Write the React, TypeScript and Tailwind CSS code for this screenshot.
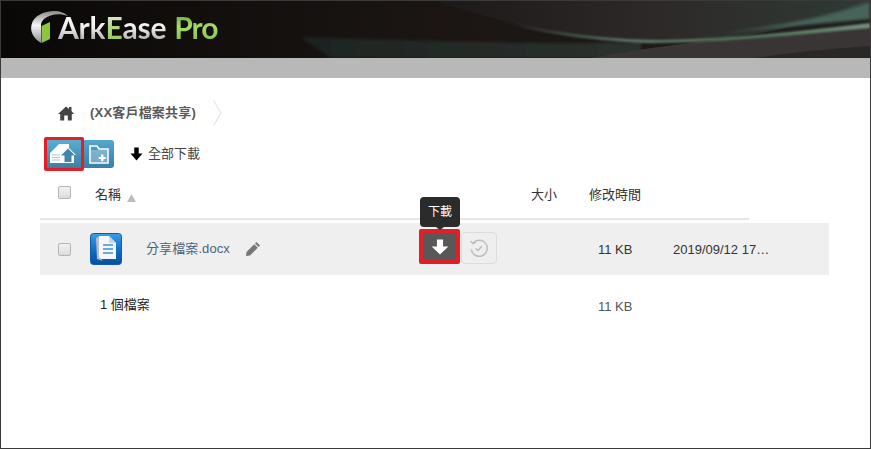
import React from "react";

function Check() {
  return <div className="w-[13px] h-[13px] rounded-[2px] border border-[#b5b5b5] bg-gradient-to-b from-[#f2f2f2] to-[#dcdcdc]" />;
}

function Logo() {
  return (
    <div className="flex items-center ml-[29px] mt-[8px]">
      <svg width="38" height="34" viewBox="0 0 38 34" className="mt-[1px] shrink-0">
        <defs>
          <linearGradient id="arc" x1="0" y1="0" x2="0" y2="1">
            <stop offset="0" stopColor="#8a8a8a" />
            <stop offset="0.45" stopColor="#f4f4f4" />
            <stop offset="1" stopColor="#8f8f8f" />
          </linearGradient>
        </defs>
        <path d="M11 33 C3 28 0 21 1.5 15 C3 6 14 1 24 1 C30 1 35 3 38 6 C30 3 20 4 14 9 C12 11 11 13 11 15 Z" fill="url(#arc)" />
        <path d="M11.5 16 L20 12 L20 29 L11.5 33 Z" fill="#8cc63f" />
      </svg>
      <div className="-ml-[10px] text-[30px] leading-[34px] font-bold font-['Lato','Liberation_Sans',sans-serif] tracking-[-0.2px] whitespace-nowrap mt-[1px]">
        <span className="bg-gradient-to-b from-[#ffffff] via-[#f0f0f0] to-[#9a9a9a] bg-clip-text text-transparent">Ark</span>
        <span className="bg-gradient-to-b from-[#f2f2f2] via-[#b4d78c] to-[#8cc63f] bg-clip-text text-transparent">E</span>
        <span className="bg-gradient-to-b from-[#ffffff] via-[#f0f0f0] to-[#9a9a9a] bg-clip-text text-transparent">ase</span>
        <span className="ml-[8px] tracking-[-1px] bg-gradient-to-b from-[#5d9a2a] via-[#a6dc6a] to-[#7cb83a] bg-clip-text text-transparent">Pro</span>
      </div>
    </div>
  );
}

function Swoosh() {
  return (
    <svg className="absolute inset-0" width="869" height="57" viewBox="0 0 869 57" preserveAspectRatio="none">
      <defs>
        <linearGradient id="up" x1="0" y1="0" x2="1" y2="0">
          <stop offset="0" stopColor="#1c1918" />
          <stop offset="0.5" stopColor="#2d2928" />
          <stop offset="1" stopColor="#2f3a35" />
        </linearGradient>
        <linearGradient id="band" x1="0" y1="0" x2="1" y2="0">
          <stop offset="0" stopColor="#2a2b29" />
          <stop offset="0.35" stopColor="#60796a" />
          <stop offset="0.7" stopColor="#4f7459" />
          <stop offset="1" stopColor="#76917f" />
        </linearGradient>
        <linearGradient id="low" x1="0" y1="0" x2="1" y2="0">
          <stop offset="0" stopColor="#1d2320" />
          <stop offset="1" stopColor="#2b312e" />
        </linearGradient>
        <filter id="b1"><feGaussianBlur stdDeviation="0.8" /></filter>
        <filter id="b2"><feGaussianBlur stdDeviation="1.6" /></filter>
      </defs>
      <path d="M300 36 C420 40 540 44 640 41 L640 57 L330 57 Z" fill="url(#low)" filter="url(#b2)" />
      <path d="M590 57 C680 40 780 32 869 25 L869 57 Z" fill="#393535" />
      <path d="M755 57 C800 50 840 47 869 45 L869 57 Z" fill="#2a2727" />
      <path d="M438 1 C500 22 570 36 640 41 C720 42 800 30 869 0 L438 0 Z" fill="url(#up)" />
      <path d="M869 0 C840 12 790 24 720 32 L869 18 Z" fill="#47645a" filter="url(#b2)" />
      <path d="M500 20 C560 34 620 39 660 39 C730 38 800 30 869 22 L869 27 C790 34 720 42 650 42 C590 40 540 32 500 20 Z" fill="url(#band)" filter="url(#b1)" />
    </svg>
  );
}

function UploadIcon() {
  return (
    <svg width="30" height="24" viewBox="0 0 30 24">
      <path d="M10 2 L20 2 L20 6 L27 13 L25 13 L25 21 L1 21 L1 11 Z" fill="#fff" />
      <path d="M3 13 H11 M3 15.5 H11 M3 18 H11" stroke="#9cc9de" strokeWidth="1" />
      <path d="M19 6.5 L26 13.5 L22.5 13.5 L22.5 20 L15.5 20 L15.5 13.5 L12 13.5 Z" fill="#3f86ad" />
    </svg>
  );
}

function FolderIcon() {
  return (
    <svg width="22" height="22" viewBox="0 0 22 22">
      <path d="M2 3 L9 3 L11 6 L20 6 L20 20 L2 20 Z" fill="none" stroke="#fff" strokeWidth="1.6" />
      <rect x="3" y="7" width="16" height="12" fill="#dcecf3" opacity="0.35" />
      <path d="M13 11.5 h2.4 v2.4 h2.4 v2 h-2.4 v2.4 h-2.4 v-2.4 h-2.4 v-2 h2.4 z" fill="#fff" />
    </svg>
  );
}

function Arrow({ fill = "#000", w = 14, h = 14 }: { fill?: string; w?: number; h?: number }) {
  return (
    <svg width={w} height={h} viewBox="0 0 14 14" preserveAspectRatio="none">
      <path d="M4.6 0.5 H9.4 V6.5 H13.5 L7 13.5 L0.5 6.5 H4.6 Z" fill={fill} />
    </svg>
  );
}

function DocIcon() {
  return (
    <svg width="32" height="32" viewBox="0 0 32 32">
      <defs>
        <linearGradient id="doc" x1="0" y1="0" x2="0" y2="1">
          <stop offset="0" stopColor="#3a9fe6" />
          <stop offset="0.55" stopColor="#0f6cc4" />
          <stop offset="1" stopColor="#0a4f9e" />
        </linearGradient>
      </defs>
      <rect x="0.5" y="0.5" width="31" height="31" rx="3" fill="url(#doc)" stroke="#0b5cab" />
      <path d="M6 5 L10 3 L10 25 L13 28 L7 26 Z" fill="#b9bcc0" />
      <path d="M9 3 L19 3 L26 10 L26 26 L11 26 L9 24 Z" fill="#f4f6f8" />
      <path d="M19 3 L19 10 L26 10 Z" fill="#cfd6dc" />
      <path d="M13 12 H23 M13 16 H23 M13 20 H23" stroke="#3d8fdc" strokeWidth="1.3" />
    </svg>
  );
}

function HistoryIcon() {
  return (
    <svg width="20" height="20" viewBox="0 0 20 20" fill="none" stroke="#bdbdbd" strokeWidth="1.5">
      <path d="M4.2 5 A8 8 0 1 1 2.3 11.5" />
      <path d="M1.5 3.2 L4 5.6 L6.8 4.2" />
      <path d="M6.5 10.5 L9 12.5 L13 8" />
    </svg>
  );
}

export default function App() {
  return (
    <div className="w-[871px] h-[449px] border border-[#3a3a3a] bg-white overflow-hidden font-['Liberation_Sans','Noto_Sans_CJK_TC',sans-serif] text-[13px] text-[#333]">
      <header className="relative h-[57px] bg-gradient-to-r from-[#0a0807] via-[#1b1614] to-[#1f1c1a] overflow-hidden">
        <Swoosh />
        <div className="relative"><Logo /></div>
      </header>
      <div className="h-[20px] bg-[#b8b8b8]" />

      <div className="flex items-center h-[26px] mt-[22px] pl-[57px]">
        <svg width="16" height="15" viewBox="0 0 16 15">
          <path d="M11 1 H13.5 V5 L16 8 L13.8 8 L13.8 14.5 L9.8 14.5 L9.8 9.5 L6.2 9.5 L6.2 14.5 L2.2 14.5 L2.2 8 L0 8 L8 0.5 L11 3 Z" fill="#444" />
        </svg>
        <span className="ml-[16px] font-bold text-[#5a5a5a] whitespace-nowrap tracking-[0.2px]">(XX客戶檔案共享)</span>
        <svg width="9" height="26" viewBox="0 0 9 26" className="ml-[17px]">
          <path d="M0.5 0.5 L8 13 L0.5 25.5" fill="none" stroke="#dcdcdc" />
        </svg>
      </div>

      <div className="flex items-center h-[34px] mt-[11px] pl-[43px]">
        <div className="flex items-center justify-center w-[40px] h-[34px] border-[3px] border-[#e21f26] rounded-[2px]">
          <div className="flex items-center justify-center w-[34px] h-[28px] bg-gradient-to-b from-[#5bacd0] to-[#3c7fa5]">
            <UploadIcon />
          </div>
        </div>
        <div className="flex items-center justify-center w-[30px] h-[28px] rounded-r-[3px] bg-gradient-to-b from-[#54a7cd] to-[#3a7ea6]">
          <FolderIcon />
        </div>
        <div className="ml-[16px] flex items-center">
          <Arrow w={13} h={14} />
          <span className="ml-[5px] text-[#444]">全部下載</span>
        </div>
      </div>

      <div className="relative ml-[39px] w-[709px] h-[49px] flex border-b-2 border-[#e6e6e6]">
        <div className="w-[18px]" />
        <div className="pt-[15px]"><Check /></div>
        <div className="ml-[24px] pt-[14px] flex items-start">
          <span>名稱</span>
          <svg width="9" height="8" viewBox="0 0 9 8" className="ml-[6px] mt-[9px]"><path d="M4.5 0 L9 8 L0 8 Z" fill="#bdbdbd" /></svg>
        </div>
        <div className="absolute left-[491px] top-[14px]">大小</div>
        <div className="absolute left-[549px] top-[14px]">修改時間</div>
      </div>

      <div className="relative ml-[39px] mt-[3px] w-[789px] h-[52px] bg-[#efefef] flex items-center">
        <div className="ml-[18px]"><Check /></div>
        <div className="ml-[19px]"><DocIcon /></div>
        <a className="ml-[24px] text-[#4a6480] whitespace-nowrap tracking-[0.1px]">分享檔案.docx</a>
        <svg width="16" height="16" viewBox="0 0 16 16" className="ml-[15px]">
          <path d="M11.5 1 L15 4.5 L13.6 6 L10 2.5 Z M9.2 3.2 L12.8 6.8 L5 14.5 L1 15 L1.5 11 Z" fill="#777" />
        </svg>
        <div className="absolute left-[379px] top-[6px] w-[41px] h-[35px] border-[4px] border-[#e21f26] rounded-[2px] bg-[#585858] flex items-center justify-center">
          <Arrow fill="#fff" w={18} h={16} />
        </div>
        <div className="absolute left-[421px] top-[9px] w-[36px] h-[32px] border border-[#dcdcdc] rounded-[4px] flex items-center justify-center">
          <HistoryIcon />
        </div>
        <div className="absolute left-[380px] top-[-26px] w-[40px] h-[30px] rounded-[4px] bg-[#2b2b2b] text-white text-[12px] flex items-center justify-center">
          下載
          <div className="absolute left-[16px] bottom-[-3px] w-0 h-0 border-x-[4px] border-x-transparent border-t-[3px] border-t-[#2b2b2b]" />
        </div>
        <div className="absolute left-[558px] top-[17px] text-[#333]">11 KB</div>
        <div className="absolute left-[633px] top-[17px] text-[#333] whitespace-nowrap">2019/09/12 17…</div>
      </div>

      <div className="relative ml-[39px] h-[60px] flex items-center">
        <div className="ml-[60px] text-[#222]">1 個檔案</div>
        <div className="absolute left-[558px] top-[22px] text-[#555]">11 KB</div>
      </div>
    </div>
  );
}
